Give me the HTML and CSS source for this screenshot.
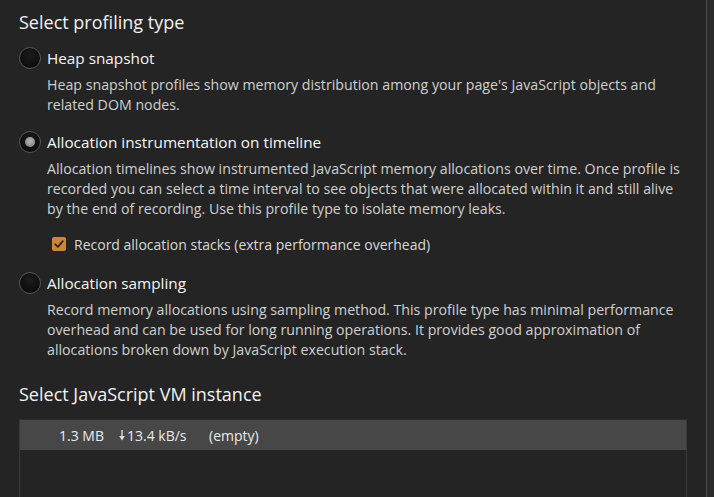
FILE: index.html
```html
<!DOCTYPE html>
<html>
<head>
<meta charset="utf-8">
<link rel="stylesheet" href="styles.css">
</head>
<body>
<div class="layout">
  <main class="content">
    <h1 class="section-title">Select profiling type</h1>

    <div class="option">
      <span class="radio"></span>
      <span class="option-label">Heap snapshot</span>
    </div>
    <p class="desc">Heap snapshot profiles show memory distribution among your page's JavaScript objects and<br>related DOM nodes.</p>

    <div class="option option-gap">
      <span class="radio radio-checked"><span class="radio-dot"></span></span>
      <span class="option-label">Allocation instrumentation on timeline</span>
    </div>
    <p class="desc">Allocation timelines show instrumented JavaScript memory allocations over time. Once profile is<br>recorded you can select a time interval to see objects that were allocated within it and still alive<br>by the end of recording. Use this profile type to isolate memory leaks.</p>

    <div class="check-row">
      <span class="checkbox">
        <svg width="14" height="14" viewBox="0 0 14 14"><path d="M3.3 7.3 L5.9 9.8 L10.8 4.2" fill="none" stroke="#2a2420" stroke-width="1.8" stroke-linecap="round" stroke-linejoin="round"/></svg>
      </span>
      <span class="check-label">Record allocation stacks (extra performance overhead)</span>
    </div>

    <div class="option option-gap3">
      <span class="radio"></span>
      <span class="option-label">Allocation sampling</span>
    </div>
    <p class="desc">Record memory allocations using sampling method. This profile type has minimal performance<br>overhead and can be used for long running operations. It provides good approximation of<br>allocations broken down by JavaScript execution stack.</p>

    <h2 class="section-title vm-title">Select JavaScript VM instance</h2>

    <div class="vm-list">
      <div class="vm-row">
        <span class="vm-size">1.3 MB</span>
        <span class="vm-rate"><svg class="arrow" width="6" height="11" viewBox="0 0 6 11"><path d="M3 0 V7" stroke="#d8e0d0" stroke-width="1.4"/><path d="M0.2 6 L3 10.5 L5.8 6 Z" fill="#d8e0d0"/></svg>13.4 kB/s</span>
        <span class="vm-name">(empty)</span>
      </div>
    </div>
  </main>
  <div class="scrollbar"></div>
</div>
</body>
</html>
```

FILE: styles.css
```css
html, body {
  margin: 0;
  padding: 0;
  height: 100%;
  background: #242424;
}

body {
  font-family: "Open Sans", "Noto Sans", sans-serif;
  color: #e6e6e6;
  overflow: hidden;
}

.layout {
  display: flex;
  height: 497px;
}

.content {
  flex: 1;
  padding: 10px 0 0 19px;
  display: flex;
  flex-direction: column;
}

.section-title {
  margin: 0;
  font-size: 18px;
  font-weight: 400;
  line-height: 24px;
  color: #f2f2f2;
}

.option {
  display: flex;
  align-items: center;
  gap: 6px;
  height: 24px;
  margin-top: 12px;
}

.option-gap { margin-top: 15px; }
.option-gap3 { margin-top: 17px; }

.radio {
  width: 20px;
  height: 20px;
  border-radius: 50%;
  border: 1px solid #555555;
  background: radial-gradient(circle at 50% 35%, #1c1c1c, #060606);
  display: flex;
  align-items: center;
  justify-content: center;
  flex: none;
}

.radio-dot {
  width: 10px;
  height: 10px;
  border-radius: 50%;
  background: radial-gradient(circle at 50% 40%, #b4b4b4, #7a7a7a);
}

.option-label {
  font-size: 15.3px;
  color: #f6f6f6;
}

.desc {
  margin: 5px 0 0 28px;
  font-size: 14.2px;
  line-height: 20px;
  color: #d0d0d0;
}

.check-row {
  display: flex;
  align-items: center;
  gap: 8px;
  height: 20px;
  margin: 15px 0 0 33px;
}

.checkbox {
  width: 14px;
  height: 14px;
  border-radius: 2px;
  background: #d0843a;
  display: flex;
  flex: none;
}

.check-label {
  font-size: 14px;
  color: #d8d8d8;
}

.vm-title {
  margin-top: 22px;
}

.vm-list {
  margin-top: 13px;
  width: 666px;
  flex: 1;
  border-left: 1px solid #3a3a3a;
  border-right: 1px solid #3a3a3a;
  border-top: 1px solid #2e2e2e;
}

.vm-row {
  height: 30px;
  background: #474747;
  display: flex;
  align-items: center;
  font-size: 14px;
  color: #ebebeb;
  padding-left: 39px;
}

.vm-size { width: 60px; }
.vm-rate { width: 90px; display: flex; align-items: center; gap: 1px; }
.arrow { margin-right: 1px; }

.scrollbar {
  width: 7px;
  flex: none;
  border-left: 1px solid #4e4e4e;
  background: #2b2b2b;
}
```
